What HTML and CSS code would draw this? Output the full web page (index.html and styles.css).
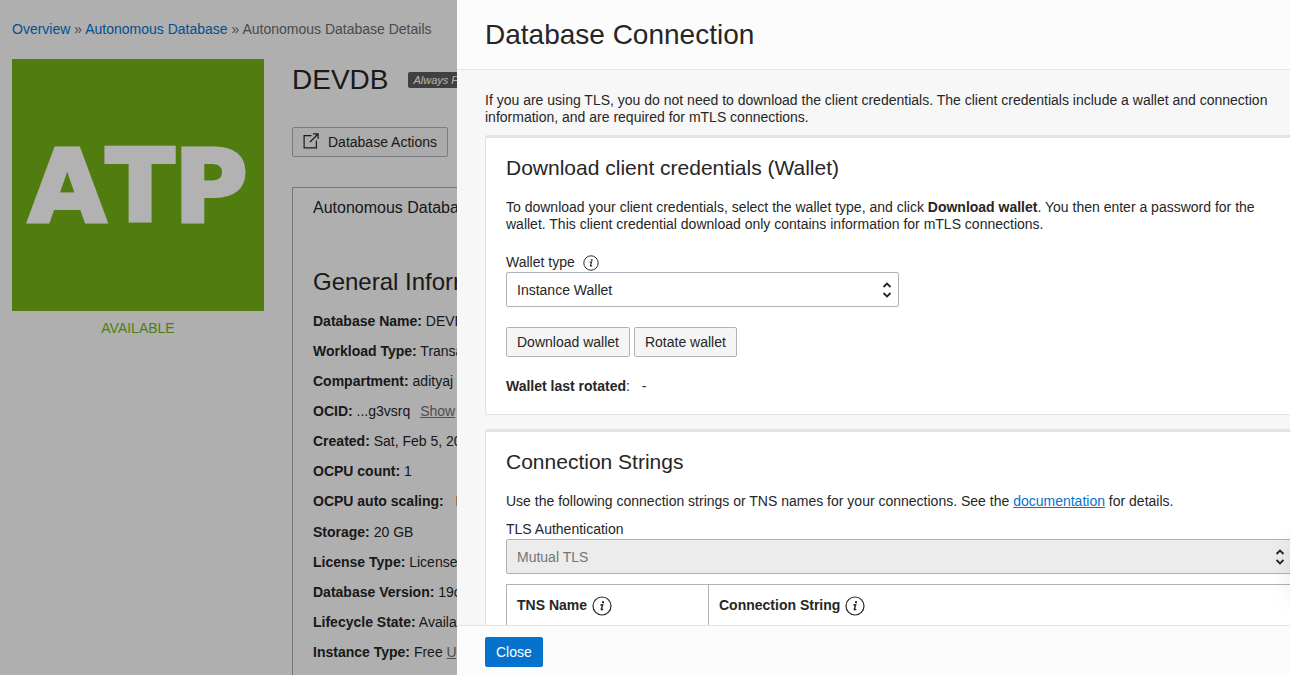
FILE: index.html
```html
<!DOCTYPE html>
<html lang="en">
<head>
<meta charset="utf-8">
<meta name="viewport" content="width=device-width, initial-scale=1">
<title>Autonomous Database Details</title>
<link rel="stylesheet" href="styles.css">
</head>
<body>
<svg class="sprite" aria-hidden="true">
  <symbol id="info" viewBox="0 0 20 20">
    <circle cx="10" cy="10" r="9" fill="none" stroke="currentColor" stroke-width="1.2"/>
    <circle cx="11" cy="6.2" r="1.1" fill="currentColor"/>
    <path d="M8.3 9.1 10.7 8.7 9.3 13.3Q9.1 14.2 11.2 13.1" fill="none" stroke="currentColor" stroke-width="1.4"/>
  </symbol>
  <symbol id="updown" viewBox="0 0 10 16">
    <path d="M1.5 5 5 1.5 8.5 5M1.5 11 5 14.5 8.5 11" fill="none" stroke="currentColor" stroke-width="1.8"/>
  </symbol>
</svg>
<div class="page">
  <nav class="crumbs" aria-label="Breadcrumb"><a href="#">Overview</a> » <a href="#">Autonomous Database</a> » <span>Autonomous Database Details</span></nav>
  <main class="details">
    <aside class="status">
      <div class="tile">ATP</div>
      <p class="state">AVAILABLE</p>
    </aside>
    <section class="content">
      <div class="name-row">
        <h1>DEVDB</h1>
        <span class="badge">Always Free</span>
      </div>
      <button class="btn btn-icon" type="button">
        <svg class="open-icon" viewBox="0 0 16 16" fill="none" stroke="currentColor" stroke-width="1.2"><path d="M8.5 2.6H1.1v12.3h12.3V7.5M7 9 15 1M10 .9h5.1V6"/></svg>
        Database Actions
      </button>
      <div class="box">
        <div class="tab">Autonomous Database Information</div>
        <h2>General Information</h2>
        <ul class="facts">
          <li><b>Database Name:</b> DEVDB</li>
          <li><b>Workload Type:</b> Transaction Processing</li>
          <li><b>Compartment:</b> adityaj</li>
          <li><b>OCID:</b> ...g3vsrq <a class="action" href="#">Show</a></li>
          <li><b>Created:</b> Sat, Feb 5, 2022</li>
          <li><b>OCPU count:</b> 1</li>
          <li class="scaling"><b>OCPU auto scaling:</b> <span>Disabled</span></li>
          <li><b>Storage:</b> 20 GB</li>
          <li><b>License Type:</b> License Included</li>
          <li><b>Database Version:</b> 19c</li>
          <li><b>Lifecycle State:</b> Available</li>
          <li><b>Instance Type:</b> Free <a class="upgrade" href="#">Upgrade</a></li>
        </ul>
      </div>
    </section>
  </main>
</div>
<div class="backdrop"></div>
<div class="drawer" role="dialog" aria-labelledby="drawer-title">
  <header class="drawer-head"><h2 id="drawer-title">Database Connection</h2></header>
  <div class="drawer-body">
    <p class="intro">If you are using TLS, you do not need to download the client credentials. The client credentials include a wallet and connection information, and are required for mTLS connections.</p>
    <section class="card">
      <h3>Download client credentials (Wallet)</h3>
      <p>To download your client credentials, select the wallet type, and click <b>Download wallet</b>. You then enter a password for the wallet. This client credential download only contains information for mTLS connections.</p>
      <div class="label-row"><label for="wallet">Wallet type</label><svg class="info small"><use href="#info"/></svg></div>
      <div class="select wallet">
        <select id="wallet"><option>Instance Wallet</option><option>Regional Wallet</option></select>
        <svg class="updown"><use href="#updown"/></svg>
      </div>
      <div class="actions">
        <button class="btn" type="button">Download wallet</button>
        <button class="btn" type="button">Rotate wallet</button>
      </div>
      <p class="rotated"><b>Wallet last rotated</b>: <span>-</span></p>
    </section>
    <section class="card">
      <h3>Connection Strings</h3>
      <p>Use the following connection strings or TNS names for your connections. See the <a href="#">documentation</a> for details.</p>
      <div class="label-row tls-label"><label for="tls">TLS Authentication</label></div>
      <div class="select tls">
        <select id="tls" disabled><option>Mutual TLS</option></select>
        <svg class="updown"><use href="#updown"/></svg>
      </div>
      <table class="strings">
        <thead><tr>
          <th class="tns" scope="col"><span class="th">TNS Name <svg class="info"><use href="#info"/></svg></span></th>
          <th scope="col"><span class="th">Connection String <svg class="info"><use href="#info"/></svg></span></th>
        </tr></thead>
      </table>
    </section>
  </div>
  <footer class="drawer-foot"><button class="btn primary" type="button">Close</button></footer>
</div>
<div class="help-tab"></div>
</body>
</html>
```
FILE: styles.css
```css
* { box-sizing: border-box; }
html, body { height: 100%; }
body {
  margin: 0;
  overflow: hidden;
  background: #fbfbfb;
  color: #262626;
  font: 14px/17px "Liberation Sans", Arial, sans-serif;
}
h1, h2, h3, p, ul { margin: 0; padding: 0; font-weight: 400; }
a { color: #0572ce; }
.sprite { display: none; }

.page { padding: 21px 12px 0; }
.crumbs { color: #6b6b6b; white-space: nowrap; }
.crumbs a { text-decoration: none; }
.details { display: flex; gap: 28px; margin-top: 21px; }
.status { flex: none; width: 252px; text-align: center; }
.tile {
  display: flex;
  align-items: center;
  justify-content: center;
  aspect-ratio: 1;
  padding-top: 4px;
  background: #74b417;
  color: #fff;
  font: 700 100px/1 "DejaVu Sans", sans-serif;
  font-kerning: none;
  -webkit-text-stroke: 4px #fff;
}
.state { margin-top: 9px; color: #74b417; }
.content { flex: 1; min-width: 0; }
.name-row { display: flex; align-items: center; gap: 20px; height: 42px; margin-bottom: 26px; }
h1 { font-size: 28px; line-height: 40px; }
.badge {
  padding: 0 5px;
  border-radius: 2px;
  background: #5c5c5c;
  color: #fff;
  font: italic 11px/16px "Liberation Sans", Arial, sans-serif;
}
.btn {
  height: 30px;
  padding: 0 10px;
  border: 1px solid #aeb3bb;
  border-radius: 2px;
  background: #f5f5f5;
  color: #262626;
  font: inherit;
}
.btn-icon { display: flex; align-items: center; gap: 9px; }
.open-icon { width: 16px; height: 16px; margin-bottom: 3px; }
.box { margin-top: 30px; padding: 11px 20px; border: 1px solid #aaa; white-space: nowrap; }
.tab { font-size: 16px; line-height: 18px; }
.box h2 { margin: 50px 0 9px; font-size: 24px; line-height: 30px; }
.facts { list-style: none; }
.facts li { height: 30px; line-height: 30px; }
.facts .scaling { height: 31px; }
.scaling span { margin-left: 8px; }
.action { margin-left: 6px; color: #707070; }
.upgrade { color: #707070; }

.backdrop { position: fixed; inset: 0; background: rgba(0, 0, 0, .3); }
.drawer {
  position: fixed;
  inset: 0 0 0 457px;
  display: flex;
  flex-direction: column;
  overflow: hidden;
  background: #f7f7f7;
}
.drawer-head { padding: 14px 28px; border-bottom: 1px solid #e4e4e6; background: #fcfcfc; }
.drawer-head h2 { font-size: 28px; line-height: 41px; }
.drawer-body {
  flex: 1;
  min-height: 0;
  padding: 22px 0 0 28px;
  overflow-y: auto;
  scrollbar-width: none;
}
.card {
  margin-bottom: 14px;
  padding: 16px 0 19px 20px;
  border: 1px solid #e2e2e6;
  border-width: 3px 0 1px 1px;
  border-radius: 3px 0 0 3px;
  background: #fff;
}
.intro { margin-bottom: 9px; }
.card h3 { margin-bottom: 17px; font-size: 21px; line-height: 28px; }
.card > p { padding-right: 20px; }
.label-row { display: flex; align-items: center; gap: 8px; margin-top: 20px; height: 19px; }
.tls-label { margin-top: 10px; }
.info { width: 20px; height: 20px; }
.info.small { width: 16px; height: 16px; }
.select { position: relative; }
.select select {
  display: block;
  width: 100%;
  height: 35px;
  padding: 2px 10px 0;
  appearance: none;
  border: 1px solid #aeb3bb;
  border-radius: 2px;
  background: #fff;
  color: #262626;
  font: inherit;
}
.select select:disabled { background: #ececec; color: #757575; opacity: 1; }
.updown { position: absolute; top: 10px; right: 7px; width: 10px; height: 16px; pointer-events: none; }
.wallet { max-width: 393px; }
.tls { margin-right: -2px; }
.actions { display: flex; gap: 4px; margin: 20px 0 21px; }
.rotated span { margin-left: 8px; }
.strings { width: 100%; margin-top: 10px; border-collapse: collapse; }
.strings th { height: 42px; padding: 0 10px; border: 1px solid #aeb3bb; border-width: 1px 0 1px 1px; text-align: left; }
.strings .tns { width: 202px; }
.th { display: flex; align-items: center; gap: 5px; }
.drawer-foot { padding: 11px 28px 8px; border-top: 1px solid #e4e4e6; background: #fcfcfc; }
.primary { border-color: #0572ce; background: #0572ce; color: #fff; }
.help-tab {
  position: fixed;
  left: 100%;
  bottom: 75px;
  width: 60px;
  height: 60px;
  box-shadow: 0 0 24px rgba(0, 0, 0, .08);
}
```
